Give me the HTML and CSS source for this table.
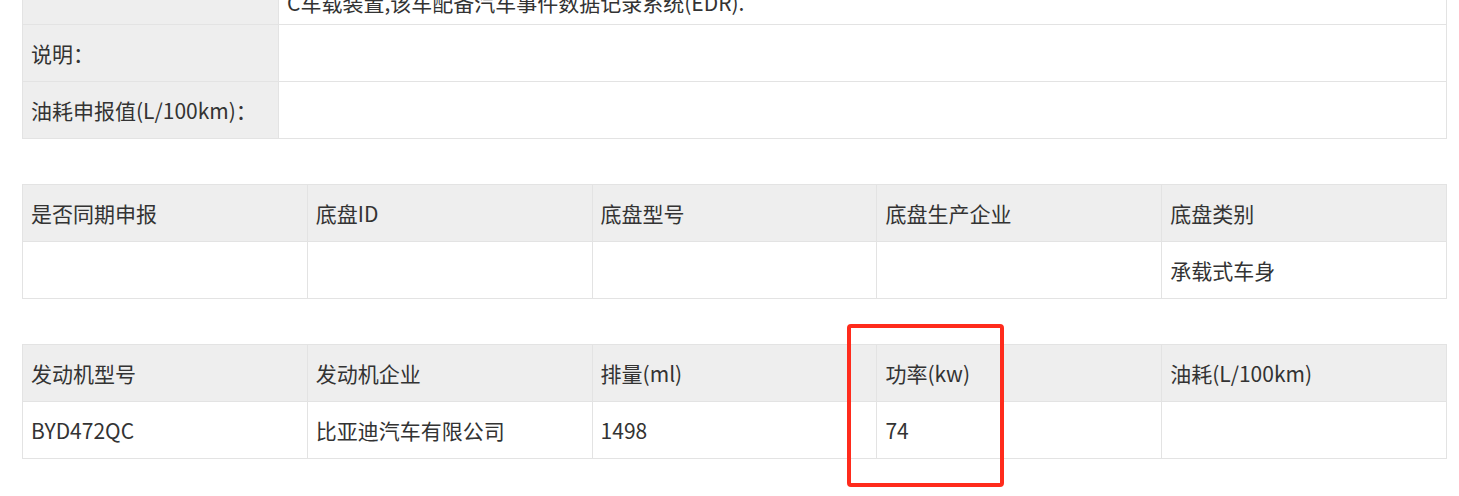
FILE: index.html
```html
<!DOCTYPE html>
<html lang="zh-CN">
<head>
<meta charset="utf-8">
<title>车辆参数</title>
<link rel="stylesheet" href="styles.css">
</head>
<body>
<div class="page">
  <table class="info">
    <colgroup><col class="info-label-col"><col></colgroup>
    <tr class="info-first">
      <td class="label">其它：</td>
      <td class="value">前防护材料为Q235,后防护材料为Q235,该车安装了符合GB 7258要求的ABS系统,该车前排安装有乘员安全气囊,该车安装有视频录像等<br>C车载装置,该车配备汽车事件数据记录系统(EDR).</td>
    </tr>
    <tr>
      <td class="label">说明：</td>
      <td class="value"></td>
    </tr>
    <tr>
      <td class="label">油耗申报值(L/100km)：</td>
      <td class="value"></td>
    </tr>
  </table>

  <table class="grid">
    <tr class="head">
      <td>是否同期申报</td>
      <td>底盘ID</td>
      <td>底盘型号</td>
      <td>底盘生产企业</td>
      <td>底盘类别</td>
    </tr>
    <tr>
      <td></td>
      <td></td>
      <td></td>
      <td></td>
      <td>承载式车身</td>
    </tr>
  </table>

  <table class="grid">
    <tr class="head">
      <td>发动机型号</td>
      <td>发动机企业</td>
      <td>排量(ml)</td>
      <td>功率(kw)</td>
      <td>油耗(L/100km)</td>
    </tr>
    <tr>
      <td>BYD472QC</td>
      <td>比亚迪汽车有限公司</td>
      <td>1498</td>
      <td>74</td>
      <td></td>
    </tr>
  </table>

  <div class="highlight"></div>
</div>
</body>
</html>
```

FILE: styles.css
```css
html, body {
  margin: 0;
  padding: 0;
  background: #ffffff;
}

body {
  font-family: "Noto Sans CJK SC", "Noto Sans", sans-serif;
  font-size: 21px;
  color: #333333;
}

.page {
  position: relative;
  display: flow-root;
  padding: 0 12px 37px 22px;
}

table {
  border-collapse: collapse;
  width: 1425px;
  table-layout: fixed;
}

td {
  border: 1px solid #e3e3e3;
  padding: 0 8px;
  height: 57px;
  vertical-align: middle;
  line-height: 24px;
  box-sizing: border-box;
  white-space: nowrap;
  overflow: hidden;
}

.info {
  margin-top: -53px;
}

.info-label-col {
  width: 256px;
}

.info .label {
  background: #eeeeee;
}

.info-first td {
  padding-top: 8px;
  padding-bottom: 6px;
  line-height: 30px;
  height: 77px;
}

.grid {
  margin-top: 45px;
}

.grid .head td {
  background: #eeeeee;
}

.highlight {
  position: absolute;
  left: 847px;
  top: 324px;
  width: 157px;
  height: 163px;
  box-sizing: border-box;
  border: 4px solid #ff2b1c;
  border-radius: 4px;
}
```
